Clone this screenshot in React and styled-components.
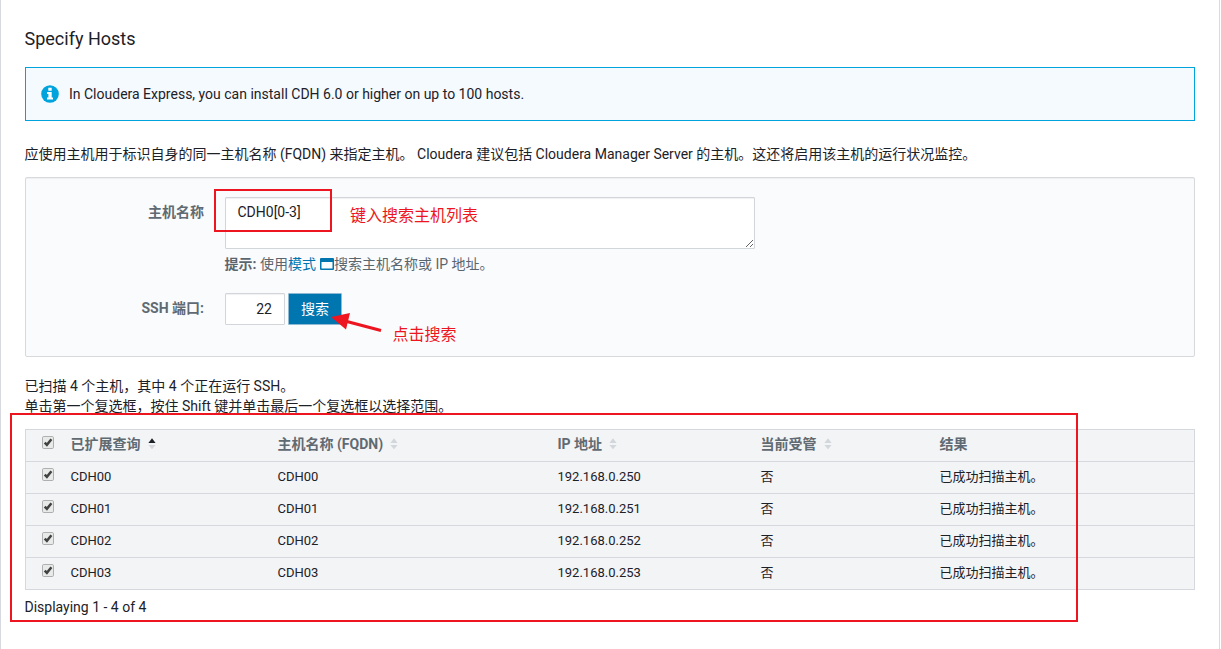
import { useState } from 'react';
import styled, { createGlobalStyle } from 'styled-components';

const GlobalStyle = createGlobalStyle`
  * {
    box-sizing: border-box;
  }

  body {
    margin: 0;
    background: #fff;
    color: #1c2127;
    font-family: Roboto, 'Noto Sans CJK SC', sans-serif;
    font-size: 14px;
    line-height: 20px;
  }
`;

const Page = styled.main`
  position: relative;
  width: 1220px;
  height: 649px;
  padding: 28px 24px 0;
  border-left: 1px solid #d7d9e0;
  border-right: 1px solid #d8dade;
  overflow: hidden;
`;

const Title = styled.h1`
  margin: 0 0 17px;
  font-size: 18px;
  line-height: 22px;
  font-weight: 400;
  text-indent: -0.5px;
`;

const Alert = styled.div`
  display: flex;
  align-items: center;
  gap: 10px;
  height: 54px;
  padding: 0 15px 1px;
  border: 1px solid #00a3dc;
  background: #f5faff;
`;

const Intro = styled.p`
  margin: 23px 0 13px;
  text-indent: -0.6px;
  white-space: nowrap;
`;

const SearchForm = styled.form`
  height: 180px;
  padding: 19px 0 0;
  border: 1px solid #d7d9dc;
  border-radius: 2px;
  background: #fafbfd;
  box-shadow: inset 0 1px 1px rgba(0, 0, 0, 0.05);
`;

const Field = styled.div`
  display: grid;
  grid-template-columns: 178px auto;
  column-gap: 21px;
  justify-content: start;
  margin-bottom: ${(p) => p.$gap || 0}px;
`;

const Label = styled.label`
  padding-top: 5px;
  text-align: right;
  font-weight: 700;
  color: #5f6a72;
`;

const HostInput = styled.textarea`
  display: block;
  width: 530px;
  height: 52px;
  padding: 4px 12px 4px 11.5px;
  border: 1px solid #d2d5d9;
  border-radius: 1px;
  outline: none;
  background: #fff;
  color: #1c2127;
  font: 14px/20px Roboto, sans-serif;
  box-shadow: inset 0 1px 1px rgba(0, 0, 0, 0.06);
`;

const Hint = styled.div`
  margin-top: 5px;
  color: #5a656d;
  text-indent: -0.5px;
`;

const HintLabel = styled.span`
  font-weight: 700;
`;

const PatternLink = styled.a`
  color: #0074af;

  svg {
    margin-left: 4px;
    vertical-align: -1px;
  }
`;

const PortRow = styled.div`
  display: flex;
  gap: 3px;
`;

const PortInput = styled.input`
  width: 60px;
  height: 32px;
  padding: 0 12px;
  border: 1px solid #d2d5d9;
  border-radius: 1px;
  outline: none;
  color: #1c2127;
  text-align: right;
  font: 14px Roboto, sans-serif;
  box-shadow: inset 0 1px 1px rgba(0, 0, 0, 0.06);
`;

const SearchButton = styled.button`
  width: 54px;
  height: 32px;
  padding: 0 0 3px;
  border: 1px solid #8fb9d2;
  border-radius: 1px;
  background: #0076b1;
  color: #fff;
  font: 14px 'Noto Sans CJK SC', sans-serif;
`;

const Status = styled.div`
  margin: 19px 0 13px;
  text-indent: -0.5px;
`;

const Table = styled.table`
  width: 1170px;
  border: 1px solid #d5d8dc;
  border-spacing: 0;
  table-layout: fixed;
  background: #f3f4f6;
`;

const HeadCell = styled.th`
  width: ${(p) => p.$width}px;
  height: 31px;
  padding: 0 0 3px;
  text-align: left;
  text-indent: -0.5px;
  font-weight: 700;
  color: #5f6a72;

  svg {
    margin-left: 7px;
    vertical-align: -1px;
  }
`;

const Cell = styled.td`
  height: 32px;
  padding: 0 0 2px;
  border-top: 1px solid #d5d8dc;
  font-size: 13px;
  text-indent: -0.5px;
`;

const CheckButton = styled.button`
  display: block;
  width: 12px;
  height: 13px;
  margin: 0 0 4px 16px;
  padding: 0;
  border: 0;
  background: none;

  && svg {
    display: block;
    margin: 0;
  }
`;

const Paging = styled.div`
  margin-top: 7px;
  text-indent: -0.5px;
`;

const MarkBox = styled.div`
  position: absolute;
  left: ${(p) => p.$x}px;
  top: ${(p) => p.$y}px;
  width: ${(p) => p.$w}px;
  height: ${(p) => p.$h}px;
  border: 2px solid #ed1520;
  pointer-events: none;
`;

const MarkText = styled.span`
  position: absolute;
  left: ${(p) => p.$x}px;
  top: ${(p) => p.$y}px;
  color: #ed1520;
  font-size: 16px;
  line-height: 24px;
  white-space: nowrap;
`;

const Arrow = styled.svg`
  position: absolute;
  left: 329px;
  top: 310px;
`;

const InfoIcon = () => (
  <svg width="18" height="18" viewBox="0 0 18 18">
    <circle cx="9" cy="9" r="8.8" fill="#00a3dc" />
    <path d="M7.3 2.8h3.4v2.9H7.3zM6 7h4.7v5.5H12v2H6v-2h1.4V9H6z" fill="#fff" />
  </svg>
);

const WindowIcon = () => (
  <svg width="14" height="12" viewBox="0 0 14 12">
    <path d="M1 0h12a1 1 0 0 1 1 1v10a1 1 0 0 1-1 1H1a1 1 0 0 1-1-1V1a1 1 0 0 1 1-1zM1.5 4v6.5h11V4z" fill="#0074af" fillRule="evenodd" />
  </svg>
);

const SortIcon = ({ active }) => (
  <svg width="8" height="12" viewBox="0 0 8 12">
    <path d="M4 0.3 7.6 5H0.4z" fill={active ? '#1c2127' : '#d3d6da'} />
    <path d="M4 11.2 7.6 7H0.4z" fill="#d3d6da" />
  </svg>
);

const Checkbox = ({ checked, onChange }) => (
  <CheckButton type="button" role="checkbox" aria-checked={checked} onClick={onChange}>
    <svg width="12" height="13" viewBox="0 0 12 13">
      <rect x="0.5" y="0.5" width="11" height="12" rx="1.3" fill="#e8e9e9" stroke="#adafb1" />
      {checked && <path d="M2.7 6.6 4.9 8.9 9.4 3.3" fill="none" stroke="#414141" strokeWidth="2.5" />}
    </svg>
  </CheckButton>
);

const columns = [
  { title: '已扩展查询', width: 207, sortable: true, active: true },
  { title: '主机名称 (FQDN)', width: 280, sortable: true },
  { title: 'IP 地址', width: 203, sortable: true },
  { title: '当前受管', width: 179, sortable: true },
  { title: '结果', width: 254 },
];

const hosts = [
  { name: 'CDH00', ip: '192.168.0.250' },
  { name: 'CDH01', ip: '192.168.0.251' },
  { name: 'CDH02', ip: '192.168.0.252' },
  { name: 'CDH03', ip: '192.168.0.253' },
];

const App = () => {
  const [pattern, setPattern] = useState('CDH0[0-3]');
  const [port, setPort] = useState('22');
  const [selected, setSelected] = useState(hosts.map((host) => host.name));

  const allSelected = selected.length === hosts.length;

  const toggleAll = () => {
    setSelected(allSelected ? [] : hosts.map((host) => host.name));
  };

  const toggleHost = (name) => {
    setSelected(selected.includes(name) ? selected.filter((n) => n !== name) : [...selected, name]);
  };

  return (
    <>
      <GlobalStyle />
      <Page>
        <Title>Specify Hosts</Title>
        <Alert>
          <InfoIcon />
          <span>In Cloudera Express, you can install CDH 6.0 or higher on up to 100 hosts.</span>
        </Alert>
        <Intro>
          应使用主机用于标识自身的同一主机名称 (FQDN) 来指定主机。 Cloudera 建议包括 Cloudera Manager Server 的主机。这还将启用该主机的运行状况监控。
        </Intro>

        <SearchForm onSubmit={(e) => e.preventDefault()}>
          <Field $gap={19}>
            <Label>主机名称</Label>
            <div>
              <HostInput value={pattern} spellCheck={false} onChange={(e) => setPattern(e.target.value)} />
              <Hint>
                <HintLabel>提示:</HintLabel> 使用<PatternLink>模式<WindowIcon /></PatternLink>搜索主机名称或 IP 地址。
              </Hint>
            </div>
          </Field>
          <Field>
            <Label>SSH 端口:</Label>
            <PortRow>
              <PortInput value={port} onChange={(e) => setPort(e.target.value)} />
              <SearchButton type="submit">搜索</SearchButton>
            </PortRow>
          </Field>
        </SearchForm>

        <Status>
          <div>已扫描 4 个主机，其中 4 个正在运行 SSH。</div>
          <div>单击第一个复选框，按住 Shift 键并单击最后一个复选框以选择范围。</div>
        </Status>

        <Table>
          <thead>
            <tr>
              <HeadCell $width={45}>
                <Checkbox checked={allSelected} onChange={toggleAll} />
              </HeadCell>
              {columns.map((column) => (
                <HeadCell key={column.title} $width={column.width}>
                  {column.title}
                  {column.sortable && <SortIcon active={column.active} />}
                </HeadCell>
              ))}
            </tr>
          </thead>
          <tbody>
            {hosts.map((host) => (
              <tr key={host.name}>
                <Cell>
                  <Checkbox checked={selected.includes(host.name)} onChange={() => toggleHost(host.name)} />
                </Cell>
                <Cell>{host.name}</Cell>
                <Cell>{host.name}</Cell>
                <Cell>{host.ip}</Cell>
                <Cell>否</Cell>
                <Cell>已成功扫描主机。</Cell>
              </tr>
            ))}
          </tbody>
        </Table>
        <Paging>Displaying 1 - 4 of 4</Paging>

        <MarkBox $x={213} $y={189} $w={118} $h={43} />
        <MarkText $x={349} $y={204}>键入搜索主机列表</MarkText>
        <Arrow width="54" height="24" viewBox="0 0 54 24">
          <path d="M15 11 51 20.5" stroke="#ed1520" strokeWidth="3" />
          <path d="M1 7 20 3 16 19.5z" fill="#ed1520" />
        </Arrow>
        <MarkText $x={391.5} $y={323}>点击搜索</MarkText>
        <MarkBox $x={9} $y={413} $w={1068} $h={209} />
      </Page>
    </>
  );
};

export default App;
